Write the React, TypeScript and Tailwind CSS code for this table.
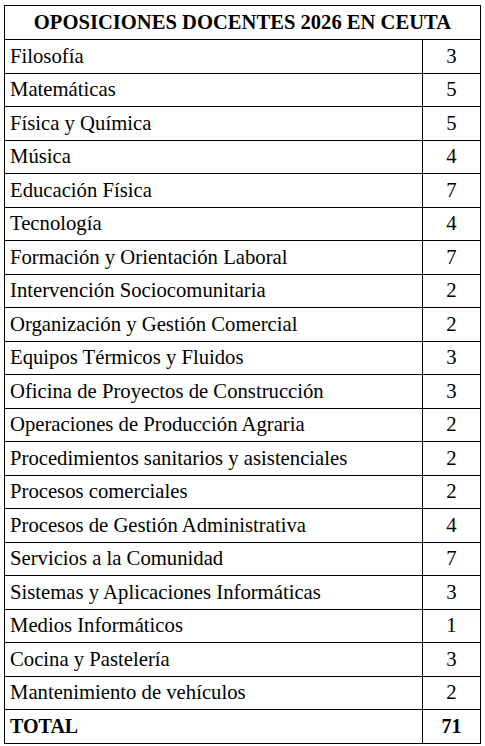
import React from "react";

const rows: [string, number][] = [
  ["Filosofía", 3],
  ["Matemáticas", 5],
  ["Física y Química", 5],
  ["Música", 4],
  ["Educación Física", 7],
  ["Tecnología", 4],
  ["Formación y Orientación Laboral", 7],
  ["Intervención Sociocomunitaria", 2],
  ["Organización y Gestión Comercial", 2],
  ["Equipos Térmicos y Fluidos", 3],
  ["Oficina de Proyectos de Construcción", 3],
  ["Operaciones de Producción Agraria", 2],
  ["Procedimientos sanitarios y asistenciales", 2],
  ["Procesos comerciales", 2],
  ["Procesos de Gestión Administrativa", 4],
  ["Servicios a la Comunidad", 7],
  ["Sistemas y Aplicaciones Informáticas", 3],
  ["Medios Informáticos", 1],
  ["Cocina y Pastelería", 3],
  ["Mantenimiento de vehículos", 2],
];

export default function App() {
  return (
    <div className="w-[485px] h-[746px] bg-white overflow-hidden pt-[5px] pl-[4px] font-['Liberation_Serif','Times_New_Roman',serif]">
      <table className="border-collapse w-[477px] text-black text-[20.7px] leading-none font-['Liberation_Serif','Times_New_Roman',serif]">
        <tbody>
          <tr className="h-[34px]">
            <td colSpan={2} className="border border-black text-center font-bold text-[20.6px]">
              OPOSICIONES DOCENTES 2026 EN CEUTA
            </td>
          </tr>
          {rows.map(([name, n]) => (
            <tr key={name} className="h-[33.5px]">
              <td className="border border-black pl-[5px] whitespace-nowrap">{name}</td>
              <td className="border border-black w-[58px] text-center">{n}</td>
            </tr>
          ))}
          <tr className="h-[33.5px]">
            <td className="border border-black pl-[5px] font-bold text-[20px]">TOTAL</td>
            <td className="border border-black w-[58px] text-center font-bold text-[20px]">71</td>
          </tr>
        </tbody>
      </table>
    </div>
  );
}
